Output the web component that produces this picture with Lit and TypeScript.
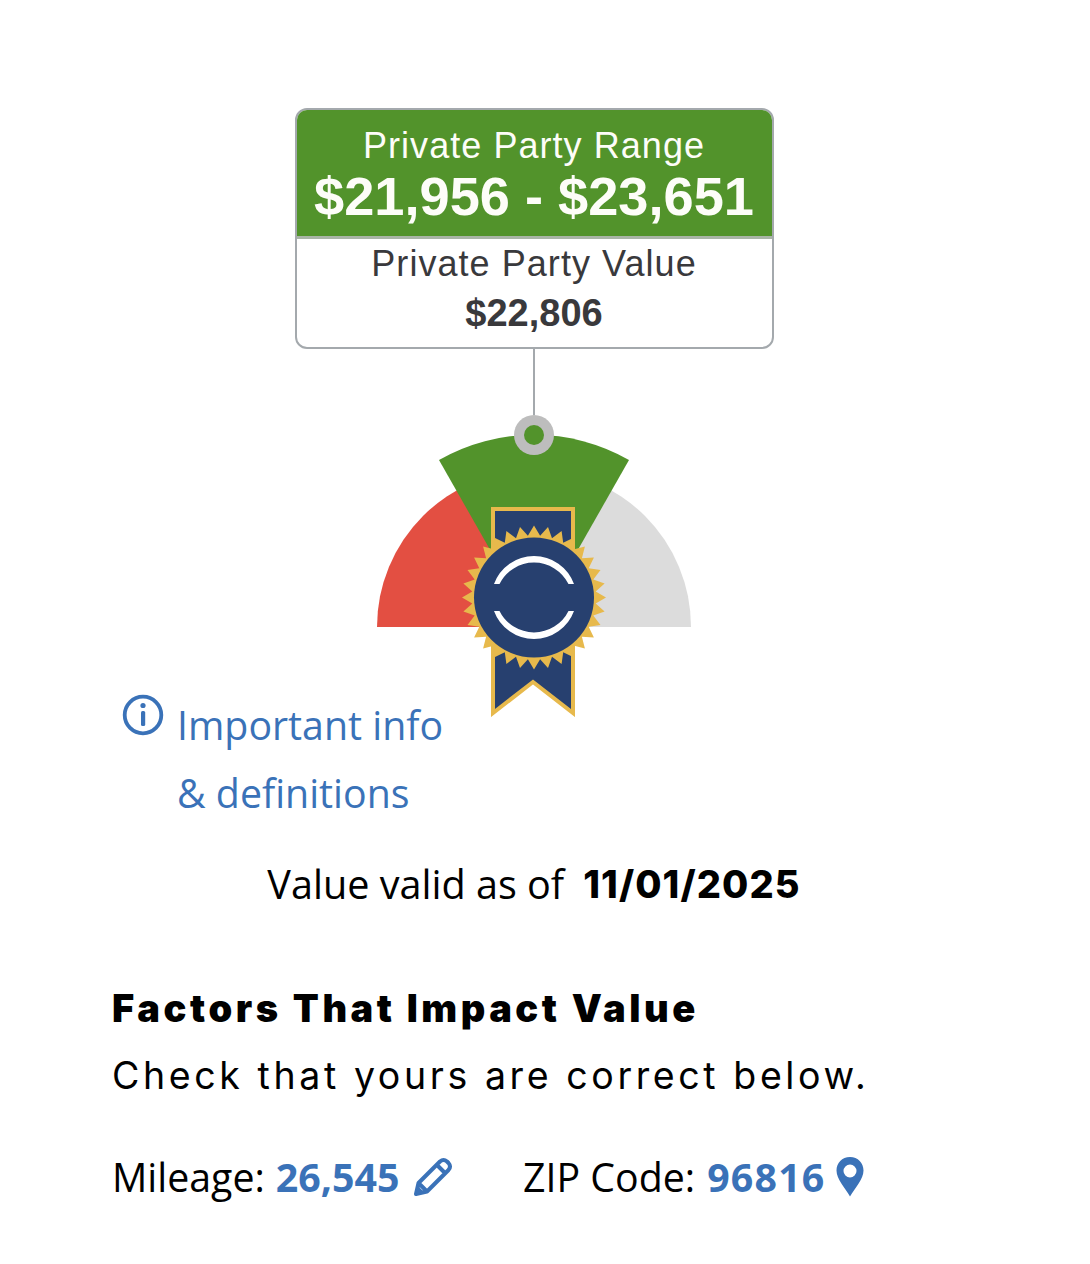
import { LitElement, html, css, svg } from "lit";
import { customElement } from "lit/decorators.js";

function burst(cx: number, cy: number, rOut: number, rIn: number, n: number) {
  const pts: string[] = [];
  for (let i = 0; i < n * 2; i++) {
    const r = i % 2 === 0 ? rOut : rIn;
    const a = (Math.PI * i) / n;
    pts.push(`${(cx + r * Math.cos(a)).toFixed(1)},${(cy + r * Math.sin(a)).toFixed(1)}`);
  }
  return pts.join(" ");
}

@customElement("app-root")
export class AppRoot extends LitElement {
  static styles = css`
    :host { display: block; width: 1090px; height: 1264px; background: #fff; overflow: hidden; color: #000; }
    .page { width: 844px; margin-left: 112px; padding-top: 108px; display: flex; flex-direction: column; }
    .center { align-self: center; display: flex; flex-direction: column; align-items: center; }
    .box { width: 479px; height: 241px; box-sizing: border-box; border: 2.5px solid #a4a9ad; border-radius: 12px; overflow: hidden;
      font-family: "Liberation Sans", Arial, sans-serif; text-align: center; }
    .top { height: 126px; background: #52932b; color: #fdfdf8; border-bottom: 3px solid #a9b5a6; box-sizing: content-box; }
    .top .l { font-size: 36px; line-height: 40px; padding-top: 16px; letter-spacing: 1.05px; }
    .top .v { font-size: 54.2px; line-height: 58px; font-weight: 700; margin-top: 1px; }
    .bottom { color: #39393c; }
    .bottom .l { font-size: 36px; line-height: 40px; padding-top: 5px; letter-spacing: 1.05px; }
    .bottom .v { font-size: 38px; line-height: 44px; font-weight: 700; margin-top: 7px; }
    .stem { width: 2px; height: 66px; background: #a4a9ad; }
    .gauge { display: block; width: 320px; height: 302px; margin-bottom: -26px; }
    .info { display: flex; align-items: flex-start; margin-left: 10px; font-family: "Open Sans", sans-serif; color: #3a72b8; font-size: 39.3px; line-height: 68px; }
    .info svg { width: 42px; height: 42px; flex: none; margin-top: 3px; margin-right: 13px; }
    .valid { margin-top: 27px; text-align: center; font-family: "Open Sans", sans-serif; font-size: 39.6px; line-height: 60px; display: flex; justify-content: center; gap: 19px; }
    .valid b { font-family: Inter, sans-serif; font-weight: 800; font-size: 38px; letter-spacing: 1.1px; }
    h2 { margin: 64px 0 0; font-family: Inter, sans-serif; font-weight: 900; font-size: 38px; line-height: 60px; letter-spacing: 3.55px; }
    .sub { font-family: Inter, sans-serif; font-size: 37.5px; line-height: 60px; margin-top: 8px; letter-spacing: 3.6px; }
    .row { display: flex; margin-top: 41px; font-family: "Open Sans", sans-serif; font-size: 39.3px; line-height: 60px; align-items: center; }
    .item { display: flex; align-items: center; }
    .item b { color: #3a72b8; font-weight: 700; margin-left: 11px; }
    .item b.zip { letter-spacing: 1.2px; margin-left: 12px; }
    .first { width: 411px; }
    .item svg { flex: none; }
    .pencil { margin-left: 14px; }
    .pin { margin-left: 10px; }
  `;

  render() {
    const cx = 160, cy = 212;
    return html`<div class="page">
      <div class="center">
        <div class="box">
          <div class="top">
            <div class="l">Private Party Range</div>
            <div class="v">$21,956 - $23,651</div>
          </div>
          <div class="bottom">
            <div class="l">Private Party Value</div>
            <div class="v">$22,806</div>
          </div>
        </div>
        <div class="stem"></div>
        <svg class="gauge" viewBox="0 0 320 302">
          <path d="M${cx - 157} ${cy} A157 157 0 0 1 ${cx} ${cy - 157} V${cy} Z" fill="#e34f42"></path>
          <path d="M${cx + 157} ${cy} A157 157 0 0 0 ${cx} ${cy - 157} V${cy} Z" fill="#dcdcdc"></path>
          <path d="M${cx - 95} ${cy - 167} A192 192 0 0 1 ${cx + 95} ${cy - 167} L${cx} ${cy} Z" fill="#52932b"></path>
          <circle cx="${cx}" cy="20" r="20" fill="#bdbdbd"></circle>
          <circle cx="${cx}" cy="20" r="10" fill="#52932b"></circle>
          <path d="M${cx - 41} 94 H${cx + 39} V298 L${cx - 1} 267 L${cx - 41} 298 Z" fill="#27406f" stroke="#e7b94c" stroke-width="4"></path>
          ${svg`<polygon points="${burst(cx, 182.5, 72, 62, 32)}" fill="#e7b94c"></polygon>`}
          <circle cx="${cx}" cy="182.5" r="60" fill="#27406f"></circle>
          <path d="M${cx - 40} 169 A42.6 42.6 0 0 1 ${cx + 40} 169 H${cx + 34.5} A38.5 38.5 0 0 0 ${cx - 34.5} 169 Z" fill="#fff"></path>
          <path d="M${cx - 40} 196 A42.6 42.6 0 0 0 ${cx + 40} 196 H${cx + 34.5} A38.5 38.5 0 0 1 ${cx - 34.5} 196 Z" fill="#fff"></path>
        </svg>
      </div>

      <div class="info">
        <svg viewBox="0 0 42 42">
          <circle cx="21" cy="21" r="18.3" fill="none" stroke="#3a72b8" stroke-width="3.8"></circle>
          <circle cx="21" cy="11.5" r="2.6" fill="#3a72b8"></circle>
          <rect x="19" y="17" width="4.2" height="15" rx="1.5" fill="#3a72b8"></rect>
        </svg>
        <div>Important info<br />&amp; definitions</div>
      </div>

      <div class="valid"><span>Value valid as of</span><b>11/01/2025</b></div>

      <h2>Factors That Impact Value</h2>
      <div class="sub">Check that yours are correct below.</div>

      <div class="row">
        <div class="item first">
          Mileage:<b>26,545</b>
          <svg class="pencil" width="40" height="40" viewBox="0 0 40 40">
            <path d="M3 37 L5.5 26 L27 4.5 Q30.5 1.5 34 4.5 L35.5 6 Q38.5 9.5 35.5 13 L14 34.5 Z M5.5 26 L14 34.5 M24 8 L32 16" fill="none" stroke="#3a72b8" stroke-width="4" stroke-linejoin="round"></path>
            <path d="M3 37 L5 29 L11 35 Z" fill="#3a72b8"></path>
          </svg>
        </div>
        <div class="item">
          ZIP Code:<b class="zip">96816</b>
          <svg class="pin" width="28" height="40" viewBox="0 0 28 40">
            <path fill-rule="evenodd" d="M14 0 C6 0 0.5 6 0.5 13.5 C0.5 22 9 31 14 39.5 C19 31 27.5 22 27.5 13.5 C27.5 6 22 0 14 0 Z M14 7.5 A6.5 6.5 0 1 1 14 20.5 A6.5 6.5 0 1 1 14 7.5 Z" fill="#3a72b8"></path>
          </svg>
        </div>
      </div>
    </div>`;
  }
}
